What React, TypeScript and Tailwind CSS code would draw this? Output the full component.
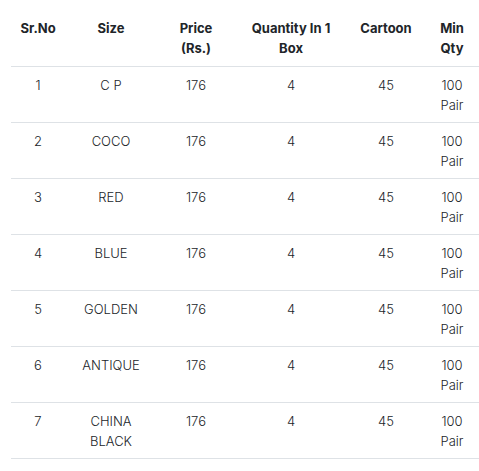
const rows = [
  { no: 1, size: "C P" },
  { no: 2, size: "COCO" },
  { no: 3, size: "RED" },
  { no: 4, size: "BLUE" },
  { no: 5, size: "GOLDEN" },
  { no: 6, size: "ANTIQUE" },
  { no: 7, size: "CHINA BLACK" },
]

export default function App() {
  return (
    <div className="pt-[10px] pl-[11px] font-['Inter','Noto_Sans',sans-serif] text-[13px] leading-[20px] text-[#212529]">
      <table className="w-[468px] table-fixed border-collapse text-center">
        <colgroup>
          <col className="w-[54px]" />
          <col className="w-[92px]" />
          <col className="w-[78px]" />
          <col className="w-[112px]" />
          <col className="w-[78px]" />
          <col className="w-[54px]" />
        </colgroup>
        <thead>
          <tr className="border-b border-[#dee2e6]">
            <th className="p-2 align-top font-bold">Sr.No</th>
            <th className="p-2 align-top font-bold">Size</th>
            <th className="p-2 align-top font-bold">Price (Rs.)</th>
            <th className="p-2 align-top font-bold">Quantity In 1 Box</th>
            <th className="p-2 align-top font-bold">Cartoon</th>
            <th className="p-2 align-top font-bold">Min Qty</th>
          </tr>
        </thead>
        <tbody className="font-light">
          {rows.map((r) => (
            <tr key={r.no} className="border-b border-[#dee2e6]">
              <td className="px-2 pt-2 pb-[7px] align-top">{r.no}</td>
              <td className="px-2 pt-2 pb-[7px] align-top">{r.size}</td>
              <td className="px-2 pt-2 pb-[7px] align-top">176</td>
              <td className="px-2 pt-2 pb-[7px] align-top">4</td>
              <td className="px-2 pt-2 pb-[7px] align-top">45</td>
              <td className="px-2 pt-2 pb-[7px] align-top">100 Pair</td>
            </tr>
          ))}
        </tbody>
      </table>
    </div>
  )
}
